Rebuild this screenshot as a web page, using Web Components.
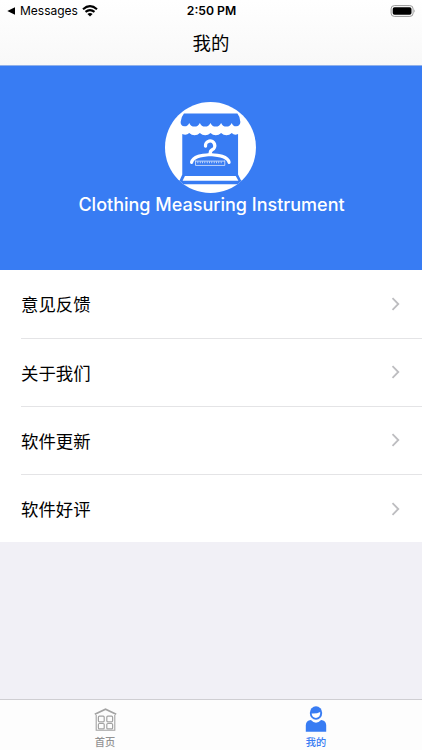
<!DOCTYPE html>
<html lang="zh-CN">
<head>
<meta charset="utf-8">
<meta name="viewport" content="width=device-width, initial-scale=1">
<title>我的</title>
<style>
html, body {margin:0; height:100%; overflow:hidden}
body {background:#f1f0f6; color:#000; font-family:Inter, "Noto Sans CJK SC", sans-serif}
</style>
</head>
<body>
<mine-page>
    <status-bar slot="top" time="2:50 PM">Messages</status-bar>
    <nav-title slot="top">我的</nav-title>
    <app-banner>Clothing Measuring Instrument</app-banner>
    <menu-row>意见反馈</menu-row>
    <menu-row>关于我们</menu-row>
    <menu-row>软件更新</menu-row>
    <menu-row last>软件好评</menu-row>
    <tab-item slot="tabs" icon="home">首页</tab-item>
    <tab-item slot="tabs" icon="user" active>我的</tab-item>
</mine-page>

<script>
class minePage extends HTMLElement {
    constructor() {
        super();
        this.sr = this.attachShadow({ mode: 'open' });
        this.sr.innerHTML = `
        <header><slot name="top"></slot></header>
        <main><slot></slot></main>
        <nav><slot name="tabs"></slot></nav>
<style>
:host {display:flex; flex-direction:column; height:100vh}
header {box-sizing:border-box; height:66px; border-bottom:1px solid #8fb0ea; background:linear-gradient(#fff, #f8f8f8)}
main {flex:1}
nav {box-sizing:border-box; display:flex; height:51px; border-top:1px solid #cfced2; background:#fdfdfd}
</style>
`;
    }
}

class statusBar extends HTMLElement {
    constructor() {
        super();
        this.sr = this.attachShadow({ mode: 'open' });
        this.sr.innerHTML = `
        <div class="back">
            <svg width="9" height="8" viewBox="0 0 9 8"><path d="M0.3 4L8 0.3V7.7Z"/></svg>
            <span class="_label"><slot></slot></span>
            <svg class="wifi" width="16" height="12" viewBox="0 0 16 12">
                <path d="M1 4.2Q8-1.9 15 4.2M3.5 6.9Q8 3.2 12.5 6.9" fill="none" stroke="#000" stroke-width="2.1"/>
                <path d="M5.4 9Q8 7 10.6 9L8 11.5Z"/>
            </svg>
        </div>
        <div id="time"></div>
        <div class="battery">
            <svg width="26" height="12" viewBox="0 0 26 12">
                <rect x="1.1" y="0.6" width="22" height="10.8" rx="3.2" fill="none" stroke="#999"/>
                <rect x="2.7" y="2.2" width="18.8" height="7.6" rx="1.8"/>
                <path d="M24.3 4.2Q25.9 6 24.3 7.8Z" fill="#999"/>
            </svg>
        </div>
<style>
:host {display:grid; grid-template-columns:1fr auto 1fr; align-items:center; height:22px; padding:0 6px 0 7px}
.back {display:flex; align-items:center; height:22px}
._label {margin:0 4px 0 4px; font-size:12px; line-height:22px}
.wifi {margin-top:-1px}
#time {font-size:12.2px; font-weight:600; line-height:22px}
.battery {display:flex; justify-content:flex-end}
svg {display:block}
</style>
`;
    }

    connectedCallback() {
        this.sr.getElementById('time').textContent = this.getAttribute('time');
    }
}

class navTitle extends HTMLElement {
    constructor() {
        super();
        this.sr = this.attachShadow({ mode: 'open' });
        this.sr.innerHTML = `
        <slot></slot>
<style>
:host {display:block; height:43px; line-height:42px; text-align:center; font-size:18.4px}
</style>
`;
    }
}

class appBanner extends HTMLElement {
    constructor() {
        super();
        this.sr = this.attachShadow({ mode: 'open' });
        this.sr.innerHTML = `
        <svg width="91" height="91" viewBox="29 20 274 274">
            <clipPath id="disc"><circle cx="166" cy="157" r="137"/></clipPath>
            <circle cx="166" cy="157" r="137" fill="#fff"/>
            <g clip-path="url(#disc)" fill="#387cf3">
                <path d="M86 55H247Q256 66 256 80Q255 92 244 93Q234 94 230 83Q225 94 214 94Q202 94 198 83Q193 94 182 94Q170 94 166 83Q161 94 150 94Q138 94 134 83Q129 94 118 94Q106 94 102 83Q97 94 87 93Q76 92 76 80Q77 66 86 55Z"/>
                <path d="M81 116Q93 122 102 113Q109 120 118 120Q127 120 134 113Q141 120 150 120Q159 120 166 113Q173 120 182 120Q191 120 198 113Q205 120 214 120Q223 120 230 113Q238 122 249 116V238L258 256L310 256V268H20V256H73L81 238Z"/>
            </g>
            <path d="M89 243H242L250 257H82Z" fill="#fff"/>
            <path d="M151 153A14 14 0 1 1 171 164Q165 167 165 176" fill="none" stroke="#fff" stroke-width="10" stroke-linecap="round"/>
            <path d="M109 202C113 183 141 180 165 178C190 180 218 183 222 202" fill="none" stroke="#fff" stroke-width="9.5" stroke-linecap="round"/>
            <path d="M121 196V211H209V196M121 198H209" fill="none" stroke="#fff" stroke-width="2"/>
            <path d="M127 202H204" fill="none" stroke="#fff" stroke-width="5" stroke-dasharray="2 5"/>
        </svg>
        <div class="name"><slot></slot></div>
<style>
:host {box-sizing:border-box; display:flex; flex-direction:column; align-items:center; height:204px; padding-top:36px; background:#387cf3; color:#fff}
svg {display:block; flex:none; margin-right:1px}
.name {padding:1px 0 0 1px; font-size:18px; font-weight:500; line-height:22px; white-space:nowrap}
</style>
`;
    }
}

class menuRow extends HTMLElement {
    constructor() {
        super();
        this.sr = this.attachShadow({ mode: 'open' });
        this.sr.innerHTML = `
        <div class="wrapper">
            <slot></slot>
            <svg width="9" height="14" viewBox="0 0 9 14"><path d="M1.5 1.2L7.3 7L1.5 12.8" fill="none" stroke="#bdbdc0" stroke-width="1.8"/></svg>
        </div>
<style>
:host {display:block; padding-left:21px; background:#fff}
.wrapper {box-sizing:border-box; display:flex; justify-content:space-between; align-items:center; height:68.2px; padding-right:22px; border-bottom:1px solid #e4e4e6; font-size:17.4px}
:host(:first-of-type) .wrapper {height:68.6px}
:host([last]) .wrapper {height:67.2px; padding-top:1px; border-bottom-color:transparent}
</style>
`;
    }
}

const icons = {
    home: `<g fill="none" stroke="#a3a3a3">
        <path d="M0.8 6.2L11.5 1.3L22.2 6.2" stroke-width="1.8"/>
        <path d="M2.2 7V22.3H20.8V7" stroke-width="1.1"/>
        <g stroke-width="1.2">
            <rect x="4.4" y="8.2" width="5.8" height="5.6" rx="1"/>
            <rect x="12.8" y="8.2" width="5.8" height="5.6" rx="1"/>
            <rect x="4.4" y="15.5" width="5.8" height="5.4" rx="1"/>
            <rect x="12.8" y="15.5" width="5.8" height="5.4" rx="1"/>
        </g>
    </g>`,
    user: `<g fill="#387cf3">
        <ellipse cx="11" cy="7" rx="6.2" ry="6.8"/>
        <path d="M0.8 25.7V19Q1.1 14.5 5.9 14.1Q11 19.6 16.1 14.1Q20.9 14.5 21.2 19V25.7Z"/>
    </g>
    <path d="M6.6 7.5Q12 7.8 15.2 6Q15.7 11.4 11 11.9Q7.1 11.6 6.6 7.5Z" fill="#fff"/>`
};

class tabItem extends HTMLElement {
    constructor() {
        super();
        this.sr = this.attachShadow({ mode: 'open' });
        this.sr.innerHTML = `
        <svg id="icon" width="23" height="26" viewBox="0 0 23 26"></svg>
        <div class="_label"><slot></slot></div>
<style>
:host {flex:1; display:flex; flex-direction:column; align-items:center; padding-top:6px; color:#929292}
:host([active]) {color:#387cf3}
svg {display:block}
._label {margin:3px 1px 0 0; font-size:10.2px; font-weight:500; line-height:14px}
</style>
`;
    }

    connectedCallback() {
        var name = this.getAttribute('icon');
        var icon = this.sr.getElementById('icon');
        icon.innerHTML = icons[name];
        // the house is drawn lower in its box than the person
        if (name == 'home') {
            icon.setAttribute('viewBox', '0 -2 23 26');
        }
    }
}

customElements.define('mine-page', minePage);
customElements.define('status-bar', statusBar);
customElements.define('nav-title', navTitle);
customElements.define('app-banner', appBanner);
customElements.define('menu-row', menuRow);
customElements.define('tab-item', tabItem);
</script>
</body>
</html>
